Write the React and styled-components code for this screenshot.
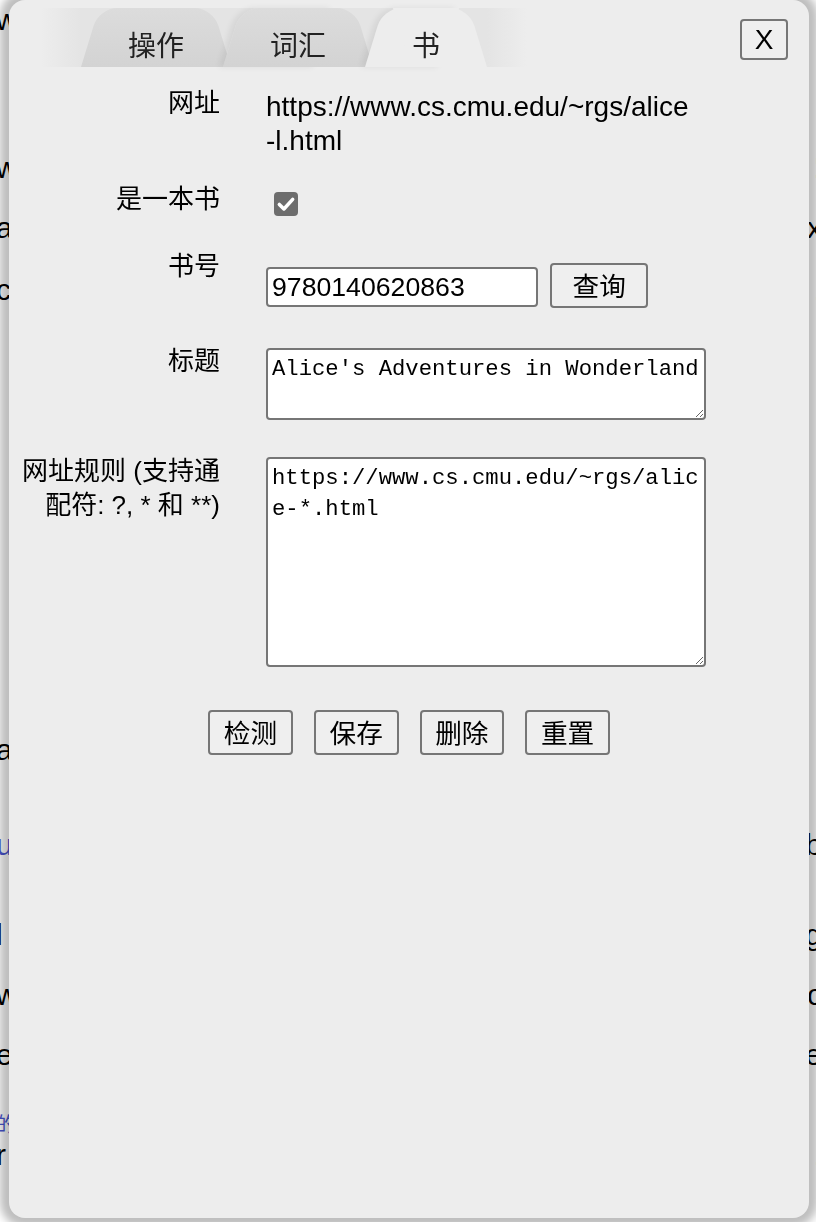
import React from 'react';
import styled, { createGlobalStyle } from 'styled-components';

const GlobalStyle = createGlobalStyle`
  html, body {
    margin: 0;
    padding: 0;
    background: #ffffff;
  }
  body {
    font-family: "Liberation Sans", "Noto Sans CJK SC", sans-serif;
    overflow: hidden;
  }
`;

const Page = styled.div`
  width: 816px;
  height: 1222px;
  overflow: hidden;
`;

const BgLine = styled.div`
  display: flex;
  justify-content: space-between;
  height: 40px;
  line-height: 40px;
  margin: ${p => p.$mt}px -6px 0 -4px;
  font-size: ${p => (p.$small ? 20 : 30)}px;
  color: #000;
`;

const BgWord = styled.span`
  color: ${p => (p.$link ? '#4a55d0' : '#000')};
`;

const Popup = styled.div`
  position: fixed;
  left: 9px;
  top: 0;
  width: 800px;
  height: 1218px;
  background: #ededed;
  border-radius: 16px;
  box-shadow: 0 0 8px 9px rgba(0, 0, 0, 0.26);
  color: #000;
`;

const Header = styled.div`
  display: flex;
  align-items: flex-start;
  height: 67px;
  padding: 8px 21px 0 32px;
  box-sizing: border-box;
`;

const TabBar = styled.div`
  display: flex;
  padding: 0 40px;
  background: linear-gradient(to right, rgba(222, 222, 222, 0), #e4e4e4 40px, #e4e4e4 calc(100% - 40px), rgba(222, 222, 222, 0));
`;

const Tab = styled.div`
  position: relative;
  z-index: ${p => p.$z};
  height: 59px;
  box-sizing: border-box;
  padding: 12px 47px 0;
  margin-left: ${p => (p.$first ? 0 : -8)}px;
  display: flex;
  align-items: center;
  font-family: "Noto Sans CJK SC", sans-serif;
  font-size: 28px;
  color: #222;
  cursor: pointer;

  &::before,
  &::after {
    content: '';
    position: absolute;
    top: 0;
    bottom: 0;
    width: 62%;
    z-index: -1;
    background: ${p => (p.$active ? '#ededed' : 'linear-gradient(to bottom, #dcdcdc, #d3d3d3)')};
  }
  &::before {
    left: 0;
    border-top-left-radius: 18px;
    transform: skewX(-17deg);
    transform-origin: bottom left;
    box-shadow: ${p => (p.$first ? 'none' : '-4px 0 6px rgba(0, 0, 0, 0.07)')};
  }
  &::after {
    right: 0;
    border-top-right-radius: 18px;
    transform: skewX(17deg);
    transform-origin: bottom right;
  }
`;

const CloseButton = styled.button`
  margin: 11px 0 0 auto;
  width: 48px;
  height: 41px;
  padding: 0;
  background: #efefef;
  border: 2px solid #767676;
  border-radius: 4px;
  font-family: "Liberation Sans", sans-serif;
  font-size: 28px;
  color: #000;
  cursor: pointer;
`;

const Form = styled.div`
  display: flex;
  flex-direction: column;
`;

const Row = styled.div`
  display: flex;
  align-items: flex-start;
  margin-top: ${p => p.$mt}px;
`;

const Label = styled.div`
  width: 205px;
  margin-left: 6px;
  text-align: right;
  font-family: "Liberation Sans", "Noto Sans CJK SC", sans-serif;
  font-size: 26px;
  line-height: 34px;
`;

const Value = styled.div`
  display: flex;
  align-items: flex-start;
  width: 441px;
  margin-left: 46px;
  padding-top: ${p => p.$pt}px;
`;

const UrlText = styled.div`
  padding-right: 12px;
  font-size: 28px;
  line-height: 34px;
  word-break: break-all;
`;

const CheckBox = styled.span`
  display: flex;
  align-items: center;
  justify-content: center;
  width: 24px;
  height: 24px;
  margin-left: 8px;
  border-radius: 4px;
  background: #6d6d6d;
`;

const TextInput = styled.input`
  box-sizing: border-box;
  width: 272px;
  height: 40px;
  margin-top: 4px;
  padding: 0 4px;
  border: 2px solid #767676;
  border-radius: 4px;
  background: #fff;
  font-family: "Liberation Sans", sans-serif;
  font-size: 26.67px;
  color: #000;
  outline: none;
`;

const Button = styled.button`
  height: 45px;
  padding: 0 ${p => (p.$wide ? 20.5 : 13.7)}px;
  margin-left: ${p => p.$ml || 0}px;
  background: #efefef;
  border: 2px solid #767676;
  border-radius: 4px;
  font-family: "Noto Sans CJK SC", sans-serif;
  font-size: 26.67px;
  line-height: 1;
  color: #000;
  cursor: pointer;
`;

const TextArea = styled.textarea`
  display: block;
  box-sizing: border-box;
  width: 440px;
  height: ${p => p.$h}px;
  padding: 4px;
  border: 2px solid #767676;
  border-radius: 4px;
  background: #fff;
  font-family: "Liberation Mono", monospace;
  font-size: 22.22px;
  line-height: 31px;
  color: #000;
  outline: none;
`;

const Actions = styled.div`
  display: flex;
  justify-content: center;
  gap: 21px;
  margin-top: 43px;
`;

const bgLines = [
  { mt: 0, left: 'w', right: 'i' },
  { mt: 108, left: 'w', right: '!' },
  { mt: 20, left: 'a', right: 'x' },
  { mt: 22, left: 'c', right: '.' },
  { mt: 420, left: 'a', right: '' },
  { mt: 55, left: 'u,', right: 'b', leftLink: true },
  { mt: 50, left: 'l', right: 'g' },
  { mt: 20, left: 'w', right: 'c' },
  { mt: 20, left: 'e', right: 'e' },
  { mt: 30, left: '的', right: '', leftLink: true, small: true },
  { mt: -10, left: 'r', right: ',' },
];

const tabs = ['操作', '词汇', '书'];

export default function App() {
  return (
    <Page>
      <GlobalStyle />
      {bgLines.map((l, i) => (
        <BgLine key={i} $mt={l.mt} $small={l.small}>
          <BgWord $link={l.leftLink}>{l.left}</BgWord>
          <BgWord>{l.right}</BgWord>
        </BgLine>
      ))}

      <Popup>
        <Header>
          <TabBar>
            {tabs.map((t, i) => (
              <Tab key={t} $first={i === 0} $active={i === 2} $z={i + 1}>
                {t}
              </Tab>
            ))}
          </TabBar>
          <CloseButton>X</CloseButton>
        </Header>

        <Form>
          <Row $mt={19}>
            <Label>网址</Label>
            <Value $pt={4}>
              <UrlText>https://www.cs.cmu.edu/~rgs/alice-l.html</UrlText>
            </Value>
          </Row>

          <Row $mt={24}>
            <Label>是一本书</Label>
            <Value $pt={10}>
              <CheckBox>
                <svg width="20" height="20" viewBox="0 0 24 24">
                  <path d="M4 12.5 L9.5 18 L20 6.5" fill="none" stroke="#fff" strokeWidth="4.2" strokeLinecap="round" strokeLinejoin="round" />
                </svg>
              </CheckBox>
            </Value>
          </Row>

          <Row $mt={33}>
            <Label>书号</Label>
            <Value $pt={14}>
              <TextInput readOnly value="9780140620863" />
              <Button $wide $ml={12}>查询</Button>
            </Value>
          </Row>

          <Row $mt={36}>
            <Label>标题</Label>
            <Value $pt={4}>
              <TextArea $h={72} readOnly value="Alice's Adventures in Wonderland" />
            </Value>
          </Row>

          <Row $mt={34}>
            <Label>网址规则 (支持通配符: ?, * 和 **)</Label>
            <Value $pt={3}>
              <TextArea $h={210} readOnly value="https://www.cs.cmu.edu/~rgs/alice-*.html" />
            </Value>
          </Row>

          <Actions>
            <Button>检测</Button>
            <Button>保存</Button>
            <Button>删除</Button>
            <Button>重置</Button>
          </Actions>
        </Form>
      </Popup>
    </Page>
  );
}
